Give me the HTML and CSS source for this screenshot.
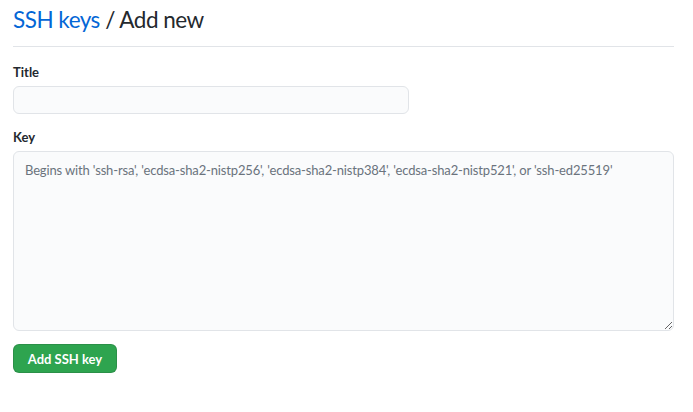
FILE: index.html
```html
<!DOCTYPE html>
<html>
<head>
<meta charset="utf-8">
<link rel="stylesheet" href="styles.css">
</head>
<body>
<div class="page">
  <div class="subhead">
    <h2 class="subhead-heading"><a href="#" class="crumb">SSH keys</a> / Add new</h2>
  </div>
  <form class="form">
    <div class="form-group">
      <label class="label" for="title">Title</label>
      <input class="form-control input-title" id="title" type="text">
    </div>
    <div class="form-group">
      <label class="label" for="key">Key</label>
      <textarea class="form-control input-key" id="key" placeholder="Begins with 'ssh-rsa', 'ecdsa-sha2-nistp256', 'ecdsa-sha2-nistp384', 'ecdsa-sha2-nistp521', or 'ssh-ed25519'"></textarea>
    </div>
    <button type="button" class="btn-primary">Add SSH key</button>
  </form>
</div>
</body>
</html>
```

FILE: styles.css
```css
* { box-sizing: border-box; }
html, body { margin: 0; padding: 0; background: #fff; }
body {
  font-family: Lato, "Noto Sans", sans-serif;
  color: #24292e;
  font-size: 14px;
}
.page {
  padding: 2px 19px 0 13px;
}
.subhead {
  border-bottom: 1px solid #e1e4e8;
  padding-bottom: 8px;
  margin-bottom: 15px;
}
.subhead-heading {
  margin: 0;
  font-size: 22.5px;
  letter-spacing: -0.5px;
  font-weight: 400;
  line-height: 36px;
}
.crumb { color: #0366d6; text-decoration: none; }
.form-group { margin-bottom: 13px; display: flex; flex-direction: column; align-items: flex-start; }
.label {
  font-weight: 700;
  font-size: 13px;
  line-height: 20px;
  margin-bottom: 4px;
}
.form-control {
  background: #fafbfc;
  border: 1px solid #e1e4e8;
  border-radius: 6px;
  font-family: inherit;
  font-size: 14px;
  line-height: 20px;
  color: #24292e;
  padding: 5px 12px;
  outline: none;
}
.input-title { width: 396px; height: 28px; }
.input-key { width: 100%; height: 180px; padding: 8px 11px; font-size: 13px; letter-spacing: -0.15px; resize: vertical; }
.input-key::placeholder { color: #6a737d; }
.btn-primary {
  background: #2ea44f;
  color: #fff;
  border: 1px solid rgba(27,31,35,.15);
  border-radius: 6px;
  font-family: inherit;
  font-weight: 700;
  font-size: 13px;
  line-height: 20px;
  padding: 4px 0;
  height: 29px;
  width: 104px;
  white-space: nowrap;
}
```
